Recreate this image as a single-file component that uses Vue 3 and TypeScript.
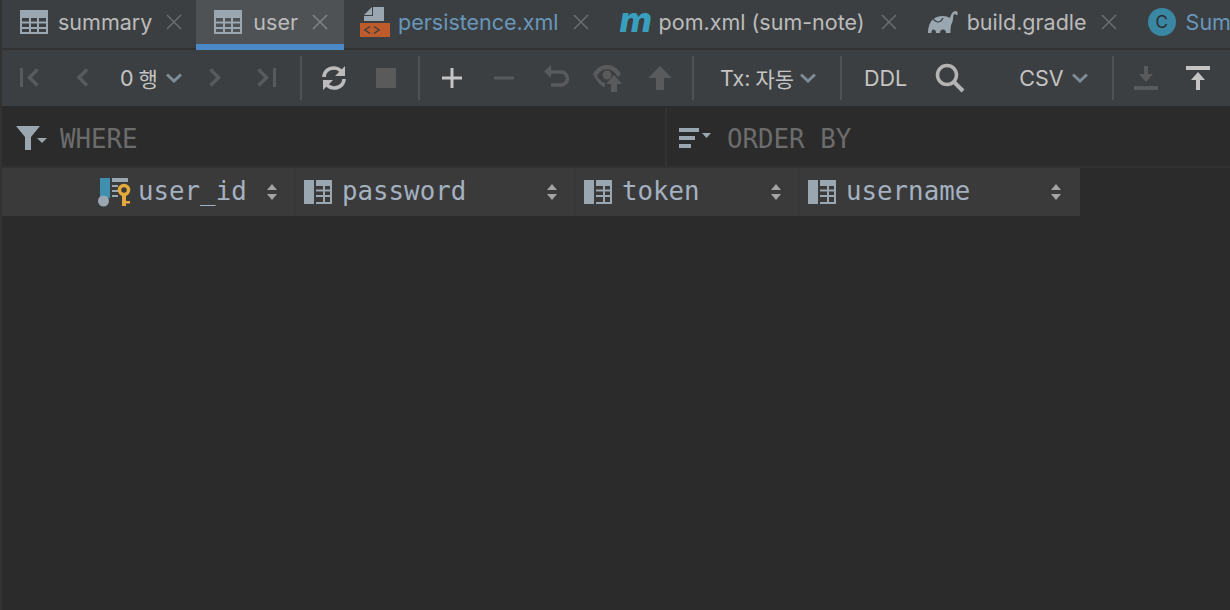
<script setup lang="ts">
interface Tab {
  name: string;
  icon: string;
  active?: boolean;
  linked?: boolean;
}

const tabs: Tab[] = [
  { name: 'summary', icon: 'table' },
  { name: 'user', icon: 'table', active: true },
  { name: 'persistence.xml', icon: 'xml', linked: true },
  { name: 'pom.xml (sum-note)', icon: 'maven' },
  { name: 'build.gradle', icon: 'gradle' },
  { name: 'Sum', icon: 'class', linked: true },
];

const columns = [
  { name: 'user_id', key: true },
  { name: 'password' },
  { name: 'token' },
  { name: 'username' },
];
</script>

<template>
  <div class="page">
    <div class="tabs">
      <div v-for="tab in tabs" :key="tab.name" class="tab" :class="[tab.icon, { active: tab.active }]">
        <svg v-if="tab.icon === 'table'" class="tab-icon" width="28" height="24" viewBox="0 0 28 24">
          <path d="M0 0h28v24H0z" fill="#9aa7b0" />
          <path d="M2 8h7v3.500H2zM11 8h6v3.500h-6zM19 8h7v3.500h-7zM2 13.500h7V17H2zM11 13.500h6V17h-6zM19 13.500h7V17h-7zM2 19h7v3H2zM11 19h6v3h-6zM19 19h7v3h-7z" :fill="tab.active ? '#4e5254' : '#3c3f41'" />
        </svg>
        <svg v-else-if="tab.icon === 'xml'" class="tab-icon" width="30" height="30" viewBox="0 0 30 30">
          <path d="M4 8 12 0v8zM13 0h11v14H4V9h9z" fill="#9aa7b0" />
          <path d="M0 16h30v14H0z" fill="#bd5b2b" />
          <path d="M10 19.500 5 23l5 3.500M14 19.500l5 3.500-5 3.500" fill="none" stroke="#3c3f41" stroke-width="1.500" />
        </svg>
        <span v-else-if="tab.icon === 'maven'" class="maven-logo">m</span>
        <svg v-else-if="tab.icon === 'gradle'" class="tab-icon" width="30" height="22" viewBox="0 0 30 22">
          <path d="M0 22C0 14 3 8 9 6C14 4 19 5 22 7C23 3 25 0 27.500 0C29.500 0 30 2 29.500 4L28 4C28 2.500 26.500 2.500 25.500 4C25 7 25 10 24 12C23 14 22.500 16 22.500 22H18C18 20 17 18.500 15 18.500C13 18.500 12 20 12 22H8C8 20 7 18.500 5.500 18.500C4 18.500 3.500 20 3.500 22z" fill="#9aa7b0" />
          <path d="M5 8C7 10 9 11 10 11C12 11 14 9 15 7" fill="none" stroke="#3c3f41" stroke-width="1.200" />
        </svg>
        <span v-else class="class-icon">C</span>
        <span class="tab-name" :class="{ linked: tab.linked }">{{ tab.name }}</span>
        <svg v-if="tab.icon !== 'class'" class="close" width="16" height="16" viewBox="0 0 16 16">
          <path d="M1 1l14 14M15 1 1 15" stroke="currentColor" stroke-width="1.500" fill="none" />
        </svg>
      </div>
    </div>

    <div class="toolbar">
      <button class="btn"><svg width="24" height="24" viewBox="0 0 24 24"><path d="M2 2h3v19H2z" fill="#585a5c" /><path d="M19.500 3.500l-8 8 8 8" class="off" /></svg></button>
      <button class="btn"><svg width="24" height="24" viewBox="0 0 24 24"><path d="M17 3.500l-8 8 8 8" class="off" /></svg></button>
      <div class="drop rows">0 <span class="ko">행</span><svg class="chev" width="16" height="10" viewBox="0 0 16 10"><path d="M1 1.500 8 8l7-6.500" /></svg></div>
      <button class="btn"><svg width="24" height="24" viewBox="0 0 24 24"><path d="M7.500 3.500l8 8-8 8" class="off" /></svg></button>
      <button class="btn"><svg width="24" height="24" viewBox="0 0 24 24"><path d="M18 2h3v19h-3z" fill="#585a5c" /><path d="M3.500 3.500l8 8-8 8" class="off" /></svg></button>
      <i class="sep first"></i>
      <button class="btn">
        <svg width="26" height="26" viewBox="0 0 26 26">
          <path d="M3 12C3 7 7 3 13 3c3 0 5 1 7 3M23 14c0 5-4 9-10 9-3 0-5-1-7-3" fill="none" stroke="#bbbbbb" stroke-width="3.500" />
          <path d="M24 1v10H14zM2 25V15h10z" fill="#bbbbbb" />
        </svg>
      </button>
      <button class="btn"><i class="stop"></i></button>
      <i class="sep"></i>
      <button class="btn"><svg width="22" height="22" viewBox="0 0 22 22"><path d="M9.500 1h3v8.500H21v3h-8.500V21h-3v-8.500H1v-3h8.500z" fill="#c4c4c4" /></svg></button>
      <button class="btn"><svg width="22" height="22" viewBox="0 0 22 22"><path d="M1 9.500h20v3H1z" fill="#585a5c" /></svg></button>
      <button class="btn">
        <svg width="28" height="28" viewBox="0 0 28 28">
          <path d="M6 8h13a6.500 6.500 0 0 1 0 13H9" fill="none" stroke="#585a5c" stroke-width="3.500" />
          <path d="M9 1v13L2 7.500z" fill="#585a5c" />
        </svg>
      </button>
      <button class="btn">
        <svg width="30" height="28" viewBox="0 0 30 28">
          <path d="M0 10C4 3 9 1 14 1s10 2 14 9l-3 3c-3-5-7-8-11-8S6 8 4 12c2 3 4 6 8 7v4C7 22 3 16 0 10z" fill="#585a5c" />
          <circle cx="14" cy="11" r="4.500" fill="#585a5c" />
          <path d="M21 11l8 9h-5v8h-6v-8h-5z" fill="#585a5c" />
        </svg>
      </button>
      <button class="btn">
        <svg width="26" height="26" viewBox="0 0 26 26"><path d="M13 1l12 12h-8v12H9V13H1z" fill="#585a5c" /></svg>
      </button>
      <i class="sep"></i>
      <div class="drop tx">Tx: <span class="ko">자동</span><svg class="chev" width="16" height="10" viewBox="0 0 16 10"><path d="M1 1.500 8 8l7-6.500" /></svg></div>
      <i class="sep"></i>
      <div class="ddl">DDL</div>
      <button class="btn search">
        <svg width="30" height="30" viewBox="0 0 30 30">
          <circle cx="12" cy="12" r="9.500" fill="none" stroke="#b4b4b4" stroke-width="3.500" />
          <path d="M18.500 18.500 28 28" stroke="#b4b4b4" stroke-width="4" fill="none" />
        </svg>
      </button>
      <div class="drop csv">CSV<svg class="chev" width="16" height="10" viewBox="0 0 16 10"><path d="M1 1.500 8 8l7-6.500" /></svg></div>
      <i class="sep"></i>
      <button class="btn">
        <svg width="24" height="24" viewBox="0 0 24 24"><path d="M10 0h4v8h5l-7 8-7-8h5zM0 20h24v4H0z" fill="#585a5c" /></svg>
      </button>
      <button class="btn">
        <svg width="24" height="24" viewBox="0 0 24 24"><path d="M0 0h24v4H0zM12 6l7 8h-5v10h-4V14H5z" fill="#c4c4c4" /></svg>
      </button>
    </div>

    <div class="filters">
      <div class="filter where">
        <svg width="32" height="24" viewBox="0 0 32 24">
          <path d="M0 0h24l-9 11v13H9V11z" fill="#9aa7b0" />
          <path d="M21 12h10l-5 5z" fill="#9aa7b0" />
        </svg>
        <span>WHERE</span>
      </div>
      <div class="filter order">
        <svg width="32" height="20" viewBox="0 0 32 20">
          <path d="M0 0h20v4H0zM0 8h16v4H0zM0 16h12v4H0z" fill="#9aa7b0" />
          <path d="M23 5h9l-4.500 5z" fill="#9aa7b0" />
        </svg>
        <span>ORDER BY</span>
      </div>
    </div>

    <div class="head">
      <div v-for="col in columns" :key="col.name" class="col" :class="col.name">
        <svg v-if="col.key" class="col-icon" width="34" height="30" viewBox="0 0 34 30">
          <path d="M2 1h10v20H2z" fill="#3e8fb0" />
          <path d="M14 1h16v4H14zM14 8h6v2h-6zM14 13h6v2h-6zM14 18h6v2h-6z" fill="#9aa7b0" />
          <circle cx="5.500" cy="24" r="5.500" fill="#9aa7b0" />
          <circle cx="26" cy="13" r="4.500" fill="none" stroke="#e5a93b" stroke-width="3.500" />
          <path d="M24 18h4v11h-4zM28 24h4v2.500h-4z" fill="#e5a93b" />
        </svg>
        <svg v-else class="col-icon" width="28" height="24" viewBox="0 0 28 24">
          <path d="M0 0h10v24H0zM12 0h16v24H12z" fill="#9aa7b0" />
          <path d="M12 6h7v3.500h-7zM21 6h5v3.500h-5zM12 11.500h7V15h-7zM21 11.500h5V15h-5zM12 17h7v5h-7zM21 17h5v5h-5z" fill="#3a3a3a" />
        </svg>
        <span class="col-name">{{ col.name }}</span>
        <svg class="sort" width="10" height="16" viewBox="0 0 10 16">
          <path d="M5 0l5 6H0zM0 10h10l-5 6z" fill="#a3a3a3" />
        </svg>
      </div>
    </div>
  </div>
</template>

<style scoped>
.page {
  width: 1230px;
  height: 610px;
  overflow: hidden;
  box-sizing: border-box;
  border-left: 2px solid #323232;
  background: #2b2b2b;
  font-family: Inter, "Noto Sans CJK KR", sans-serif;
  display: flex;
  flex-direction: column;
}

.tabs {
  height: 50px;
  flex: none;
  box-sizing: border-box;
  border-bottom: 2px solid #323232;
  background: #3c3f41;
  display: flex;
  white-space: nowrap;
}

.tab {
  flex: none;
  height: 50px;
  box-sizing: border-box;
  padding: 0 14px 0 17px;
  display: flex;
  align-items: center;
  font-size: 21.500px;
  color: #bbbbbb;
}

.tab > * {
  margin-top: -6px;
}

.tab.table {
  padding-left: 18px;
}

.tab.active {
  padding-right: 16px;
  background: #4e5254;
  border-bottom: 6px solid #4a88c7;
}

.tab.active > * {
  margin-top: 0;
}

.tab.active .tab-name {
  margin-left: 11px;
}

.tab.maven .close {
  margin-left: 16px;
}

.tab-name {
  margin-left: 10px;
}

.tab.xml .tab-icon {
  margin-left: -1px;
}

.tab.xml .tab-name,
.tab.maven .tab-name {
  margin-left: 8px;
}

.tab.gradle .tab-name {
  margin-left: 9px;
}

.tab-name.linked {
  color: #6897bb;
}

.close {
  flex: none;
  margin-left: 14px;
  color: #6a6c6e;
}

.active .close {
  color: #808284;
}

.tab .maven-logo {
  flex: none;
  width: 31px;
  margin-top: -12px;
  font: italic 800 35px/30px Inter, sans-serif;
  color: #389fbe;
}

.class-icon {
  width: 28px;
  height: 28px;
  flex: none;
  border-radius: 50%;
  background: #3a87a3;
  color: #2b2b2b;
  font-size: 17px;
  display: flex;
  align-items: center;
  justify-content: center;
}

.toolbar {
  height: 56px;
  flex: none;
  background: #3c3f41;
  display: flex;
  align-items: center;
  padding-left: 2px;
  color: #c4c4c4;
  font-size: 21.500px;
  white-space: nowrap;
}

.ko {
  font-size: 21px;
  margin-left: 5px;
}

.btn {
  flex: none;
  width: 52px;
  height: 44px;
  padding: 0;
  border: 0;
  background: none;
  display: flex;
  align-items: center;
  justify-content: center;
}

.off {
  fill: none;
  stroke: #585a5c;
  stroke-width: 3.500;
}

.stop {
  display: block;
  width: 20px;
  height: 20px;
  background: #5a5a5a;
}

.sep {
  flex: none;
  width: 2px;
  height: 44px;
  margin: 0 6px;
  background: #4f5153;
}

.sep.first {
  margin-left: 7px;
}

.drop {
  flex: none;
  display: flex;
  align-items: center;
}

.chev {
  fill: none;
  stroke: #7d8c97;
  stroke-width: 3;
  margin-left: 8px;
}

.rows {
  width: 81px;
  box-sizing: border-box;
  padding-left: 12px;
}

.tx {
  width: 134px;
  box-sizing: border-box;
  padding-left: 20px;
}

.tx .chev {
  margin-left: 6px;
}

.ddl {
  flex: none;
  margin-left: 16px;
}

.search {
  margin-left: 17px;
}

.csv {
  width: 130px;
  box-sizing: border-box;
  padding-left: 43px;
}

.filters {
  height: 60px;
  flex: none;
  margin-top: 2px;
  box-sizing: border-box;
  border-bottom: 2px solid #323232;
  display: flex;
  font-family: "DejaVu Sans Mono", monospace;
  font-size: 25.800px;
  color: #6c6c6c;
}

.filter {
  display: flex;
  align-items: center;
  padding-top: 2px;
}

.filter span {
  margin-top: 2px;
}

.where {
  width: 665px;
  box-sizing: border-box;
  padding-left: 14px;
  border-right: 2px solid #323232;
  gap: 12px;
}

.order {
  padding-left: 12px;
  gap: 16px;
}

.head {
  height: 48px;
  width: 1078px;
  flex: none;
  background: #3a3a3a;
  display: flex;
  font-family: "DejaVu Sans Mono", monospace;
  font-size: 25.800px;
  color: #a4b1c1;
}

.col {
  display: flex;
  align-items: center;
  box-sizing: border-box;
  border-right: 2px solid #363636;
  padding-left: 8px;
}

.col-name {
  margin-left: 10px;
  margin-top: -3px;
}

.sort {
  margin-left: auto;
  margin-right: 17px;
}

.user_id {
  width: 294px;
  padding-left: 96px;
}

.user_id .col-name {
  margin-left: 6px;
}

.password {
  width: 280px;
}

.token {
  width: 224px;
}

.username {
  width: 280px;
  border-right: 0;
}

.username .sort {
  margin-right: 19px;
}
</style>
